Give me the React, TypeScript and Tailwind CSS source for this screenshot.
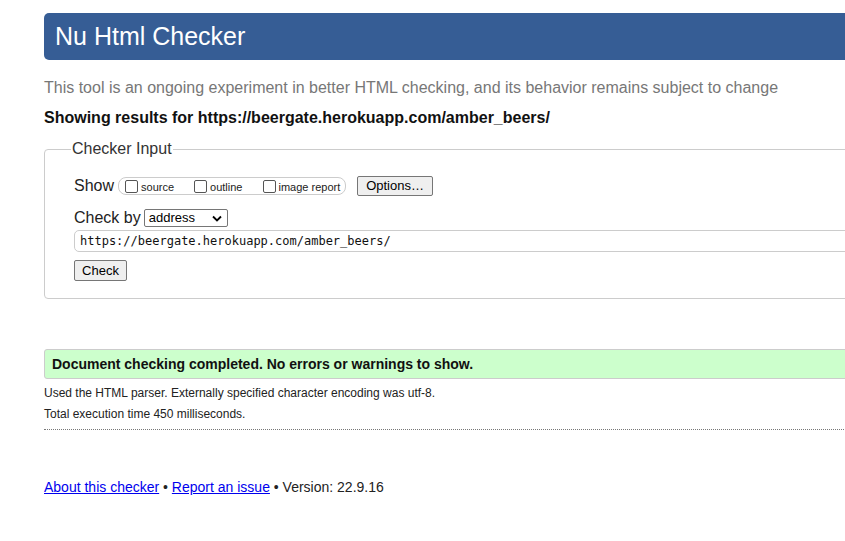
export default function App() {
  return (
    <div className="w-[845px] h-[541px] overflow-hidden bg-white font-['Liberation_Sans',Arial,sans-serif] text-[#222]">
      <div className="ml-[44px] w-[860px] pt-[13px]">
        {/* Header */}
        <h1 className="h-[47px] rounded-[5px] bg-[#365d95] pl-[11px] text-[25px] leading-[47px] text-white">Nu Html Checker</h1>

        <p className="mt-[16px] text-[16px] leading-[24px] text-[#777]">
          This tool is an ongoing experiment in better HTML checking, and its behavior remains subject to change
        </p>
        <p className="mt-[6px] text-[16px] font-bold leading-[24px] text-[#111]">
          Showing results for https://beergate.herokuapp.com/amber_beers/
        </p>

        {/* Checker input */}
        <fieldset className="mt-[10px] h-[159px] rounded-[4px] border border-[#ccc] pl-[29px]">
          <legend className="ml-[-3px] px-[1px] text-[16px] leading-[18px] text-[#333]">Checker Input</legend>

          <div className="mt-[17px] flex items-center h-[22px]">
            <span className="text-[16px] text-[#222]">Show</span>
            <div className="ml-[4px] flex h-[18px] w-[228px] items-center whitespace-nowrap rounded-[8px] border border-[#ccc] pl-[6px] text-[11px] text-[#222]">
              <label className="flex items-center">
                <span className="inline-block h-[13px] w-[13px] rounded-[2px] border border-[#555]"></span>
                <span className="ml-[3px] mt-[3px]">source</span>
              </label>
              <label className="ml-[20px] flex items-center">
                <span className="inline-block h-[13px] w-[13px] rounded-[2px] border border-[#555]"></span>
                <span className="ml-[3px] mt-[3px]">outline</span>
              </label>
              <label className="ml-[21px] flex items-center">
                <span className="inline-block h-[13px] w-[13px] rounded-[2px] border border-[#555]"></span>
                <span className="ml-[2px] mt-[3px]">image report</span>
              </label>
            </div>
            <button className="ml-[11px] h-[20px] w-[76px] rounded-[2px] border border-[#767676] bg-[#efefef] text-[13px] leading-[18px] text-black">
              Options…
            </button>
          </div>

          <div className="mt-[11px] flex h-[20px] items-center">
            <span className="text-[16px] text-[#222]">Check by</span>
            <div className="ml-[3px] flex h-[18px] w-[84px] items-center justify-between rounded-[2px] border border-[#767676] pl-[4px] pr-[5px] text-[13px] text-black">
              <span>address</span>
              <svg width="10" height="7" viewBox="0 0 10 7">
                <path d="M1 1.5 L5 5.5 L9 1.5" fill="none" stroke="#000" strokeWidth="1.8" />
              </svg>
            </div>
          </div>

          <div className="mt-[2px] flex h-[22px] items-center rounded-l-[5px] border border-[#ccc] pl-[5px] font-['DejaVu_Sans_Mono',monospace] text-[12px] text-[#111]">
            https://beergate.herokuapp.com/amber_beers/
          </div>

          <button className="mt-[8px] h-[21px] w-[53px] rounded-[2px] border border-[#767676] bg-[#efefef] text-[13px] leading-[19px] text-black">
            Check
          </button>
        </fieldset>

        {/* Result */}
        <div className="mt-[50px] h-[30px] rounded-l-[3px] border border-[#ccc] bg-[#ccffcc] pl-[7px] text-[14px] font-bold leading-[28px] text-[#111]">
          Document checking completed. No errors or warnings to show.
        </div>
        <p className="mt-[6px] text-[12px] leading-[16px] text-[#222]">
          Used the HTML parser. Externally specified character encoding was utf-8.
        </p>
        <p className="mt-[5px] text-[12px] leading-[16px] text-[#222]">Total execution time 450 milliseconds.</p>
        <div className="mt-[7px] border-t border-dotted border-[#777]"></div>

        {/* Footer */}
        <p className="mt-[48px] text-[14px] leading-[18px] text-[#222]">
          <a href="#" className="text-[#0000ee] underline">About this checker</a>
          {' • '}
          <a href="#" className="text-[#0000ee] underline">Report an issue</a>
          {' • Version: 22.9.16'}
        </p>
      </div>
    </div>
  );
}
